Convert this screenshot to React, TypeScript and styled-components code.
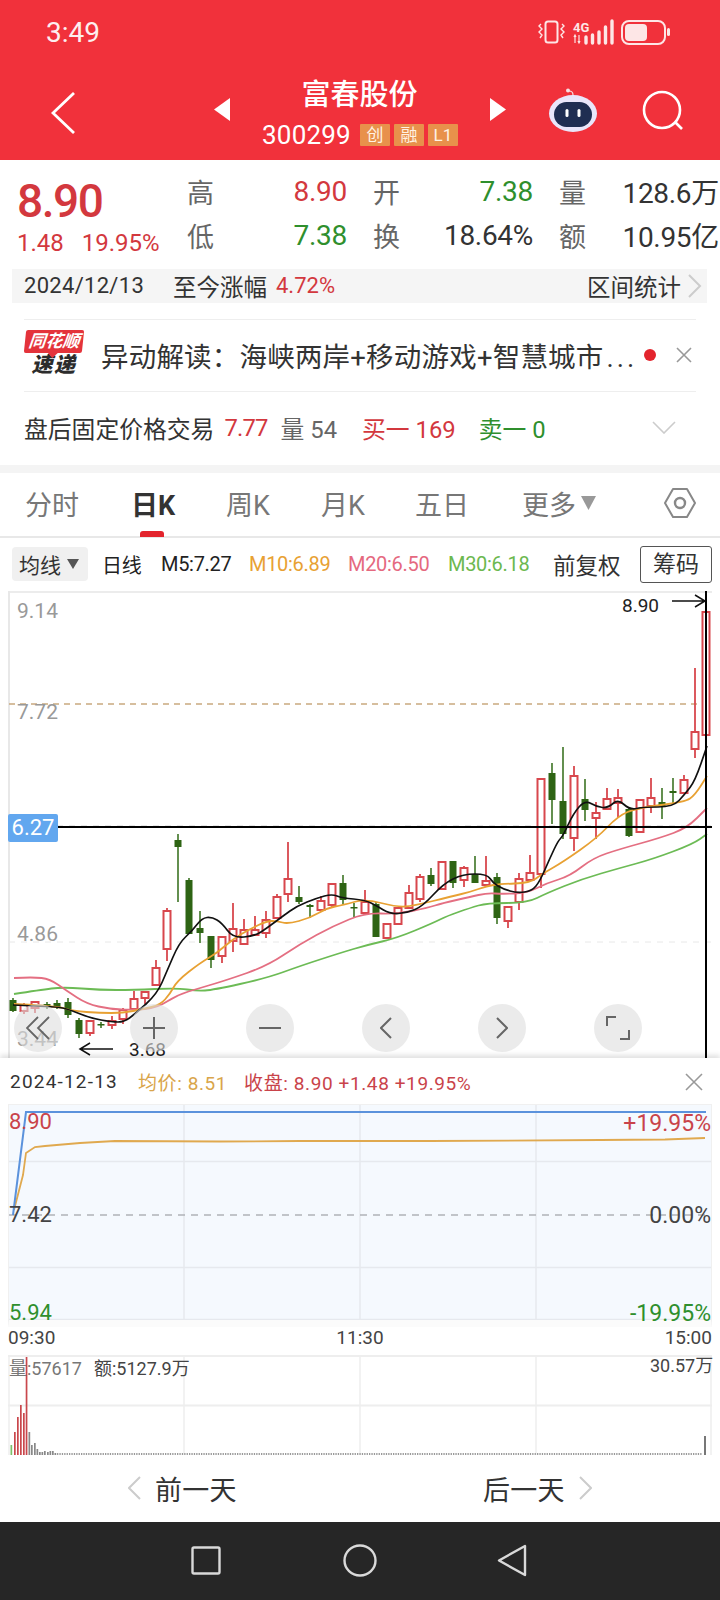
import styled, { createGlobalStyle } from "styled-components";

const FONT = `Roboto, "Noto Sans CJK SC", sans-serif`;
const RED = "#d3383e";
const GREEN = "#2f8f2d";

const GlobalStyle = createGlobalStyle`
  html, body {
    margin: 0;
    padding: 0;
    background: #fff;
  }
  * {
    box-sizing: border-box;
  }
`;

const Page = styled.div`
  width: 720px;
  height: 1600px;
  overflow: hidden;
  display: flex;
  flex-direction: column;
  font-family: ${FONT};
  color: #333;
  background: #fff;
`;

/* header */
const Header = styled.header`
  height: 160px;
  background: #f1313b;
  color: #fff;
  display: flex;
  flex-direction: column;
`;
const StatusBar = styled.div`
  height: 66px;
  padding: 0 50px 2px 46px;
  display: flex;
  align-items: center;
  justify-content: space-between;
`;
const Clock = styled.span`
  font-size: 28px;
  opacity: 0.92;
`;
const NavBar = styled.div`
  height: 94px;
  position: relative;
  display: flex;
  align-items: center;
  padding: 0 36px 0 51px;
`;
const TitleBlock = styled.div`
  flex: 1;
  display: flex;
  align-items: center;
  justify-content: center;
  margin: -8px 0 0 96px;
`;
const TitleCenter = styled.div`
  width: 260px;
  display: flex;
  flex-direction: column;
  align-items: center;
  margin-top: 6px;
`;
const Title = styled.div`
  font-size: 29px;
  line-height: 36px;
  margin-bottom: 10px;
  margin-top: -4px;
  font-weight: 500;
`;
const CodeRow = styled.div`
  display: flex;
  align-items: center;
  gap: 4px;
  margin-left: 1px;
  margin-bottom: -4px;
`;
const Code = styled.span`
  font-size: 26px;
  line-height: 24px;
  margin-right: 5px;
  letter-spacing: 0.2px;
`;
const Badge = styled.span`
  height: 22px;
  width: 30px;
  background: #e8914b;
  border-radius: 1px;
  font-size: 17px;
  line-height: 22px;
  text-align: center;
  color: #fff2e4;
`;
const NavIcons = styled.div`
  display: flex;
  align-items: center;
  gap: 44px;
  margin-top: -6px;
`;

/* quote */
const Quote = styled.section`
  height: 109px;
  display: flex;
`;
const PriceBlock = styled.div`
  width: 187px;
  padding: 17px 0 0 17px;
  color: ${RED};
`;
const BigPrice = styled.div`
  font-size: 46px;
  line-height: 48px;
  letter-spacing: -1.4px;
  font-weight: 500;
`;
const Change = styled.div`
  margin-top: 4px;
  font-size: 24px;
  line-height: 28px;
  display: flex;
  gap: 18px;
`;
const StatGrid = styled.div`
  display: grid;
  grid-template-columns: 160px 160px 160px;
  column-gap: 26px;
  grid-auto-rows: 44px;
  padding-top: 9px;
`;
const Stat = styled.div`
  display: flex;
  align-items: center;
  justify-content: space-between;
`;
const StatLabel = styled.span`
  font-size: 27px;
  color: #666;
`;
const StatValue = styled.span<{ $color?: string }>`
  font-size: 28px;
  white-space: nowrap;
  letter-spacing: -0.3px;
  color: ${(p) => p.$color || "#333"};
`;

const RangeBar = styled.div`
  height: 34px;
  margin: 0 13px 16px 12px;
  padding: 0 5px 0 12px;
  background: #f5f5f5;
  display: flex;
  align-items: center;
  font-size: 23.5px;
  color: #333;
`;
const RangeDate = styled.span`
  width: 149px;
  font-size: 22px;
  letter-spacing: 0.3px;
`;
const RangeGain = styled.span`
  flex: 1;
  font-size: 22px;
  color: ${RED};
  margin-left: 9px;
`;

/* info rows */
const InfoRows = styled.div`
  margin: 0 24px;
`;
const NewsRow = styled.div`
  height: 73px;
  border-top: 1px solid #eee;
  border-bottom: 1px solid #eee;
  display: flex;
  align-items: center;
`;
const Logo = styled.div`
  width: 60px;
  height: 48px;
  position: relative;
  display: flex;
  flex-direction: column;
  align-items: center;
  margin: -2px 17px 0 0;
`;
const LogoFlag = styled.div`
  width: 58px;
  height: 23px;
  background: #e4333b;
  border-radius: 2px;
  transform: skewX(-6deg);
  color: #fff;
  font-size: 17px;
  line-height: 23px;
  font-weight: 700;
  font-style: italic;
  text-align: center;
  position: relative;
  &::after {
    content: "";
    position: absolute;
    left: 24px;
    bottom: -5px;
    border-left: 5px solid transparent;
    border-right: 5px solid transparent;
    border-top: 5px solid #e4333b;
  }
`;
const LogoText = styled.div`
  font-size: 21px;
  line-height: 25px;
  letter-spacing: 1.5px;
  font-weight: 900;
  font-style: italic;
  color: #2c2c2c;
`;
const NewsText = styled.div`
  width: 534px;
  font-size: 27.5px;
  letter-spacing: 0.2px;
  white-space: nowrap;
  color: #333;
`;
const Dots = styled.span`
  letter-spacing: 3px;
  margin-left: 3px;
`;
const RedDot = styled.span`
  width: 12px;
  height: 12px;
  border-radius: 50%;
  background: #e3242d;
  margin: 0 22px 0 9px;
`;
const AfterRow = styled.div`
  height: 73px;
  display: flex;
  align-items: center;
  font-size: 23.8px;
  white-space: nowrap;
  padding-bottom: 1px;
`;
const AfterPart = styled.span<{ $color?: string; $gap?: number }>`
  color: ${(p) => p.$color || "#333"};
  margin-left: ${(p) => p.$gap || 0}px;
`;
const AfterPrice = styled(AfterPart)`
  letter-spacing: -0.8px;
`;
const AfterChevron = styled.span`
  margin-left: auto;
  margin-right: 20px;
  display: flex;
`;
const GrayGap = styled.div`
  height: 8px;
  background: #f4f4f4;
`;

/* tabs */
const Tabs = styled.nav`
  height: 65px;
  border-bottom: 2px solid #e8e8e8;
  display: flex;
  align-items: center;
  padding: 0 24px 2px 25px;
  position: relative;
`;
const Tab = styled.span<{ $active?: boolean; $width: number }>`
  width: ${(p) => p.$width}px;
  font-size: 27px;
  font-weight: ${(p) => (p.$active ? 700 : 400)};
  color: ${(p) => (p.$active ? "#333" : "#777")};
  position: relative;
  white-space: nowrap;
  &::after {
    content: "";
    display: ${(p) => (p.$active ? "block" : "none")};
    position: absolute;
    left: 9px;
    top: 47px;
    width: 24px;
    height: 6px;
    border-radius: 3px 3px 0 0;
    background: #e3242d;
  }
`;
const MoreTab = styled.span`
  display: flex;
  align-items: center;
  gap: 5px;
  font-size: 27px;
  color: #777;
`;
const HexWrap = styled.span`
  margin-left: auto;
  display: flex;
`;

/* toolbar */
const Toolbar = styled.div`
  height: 53px;
  display: flex;
  align-items: center;
  padding: 0 8px 0 12px;
  white-space: nowrap;
`;
const MaPill = styled.div`
  width: 76px;
  height: 34px;
  margin-right: 14px;
  border-radius: 4px;
  background: #f0f0f0;
  display: flex;
  align-items: center;
  gap: 6px;
  padding-left: 7px;
  font-size: 21px;
  color: #333;
`;
const ToolText = styled.span<{ $color?: string; $width: number }>`
  width: ${(p) => p.$width}px;
  font-size: 20px;
  letter-spacing: -0.3px;
  color: ${(p) => p.$color || "#222"};
`;
const AdjustText = styled.span`
  width: 87px;
  font-size: 22.5px;
  color: #333;
`;
const ChipButton = styled.span`
  width: 72px;
  height: 37px;
  border: 1px solid #555;
  border-radius: 3px;
  font-size: 23px;
  line-height: 35px;
  text-align: center;
  color: #333;
`;

/* kline */
const KlineChart = styled.div`
  height: 468px;
  position: relative;
`;
const ChartSvg = styled.svg`
  display: block;
  position: absolute;
  inset: 0;
`;
const AxisLabel = styled.span<{ $x: number; $y: number; $color?: string; $size?: number }>`
  position: absolute;
  left: ${(p) => p.$x}px;
  top: ${(p) => p.$y}px;
  transform: translateY(-50%);
  font-size: ${(p) => p.$size || 21}px;
  line-height: 1;
  white-space: nowrap;
  color: ${(p) => p.$color || "#999"};
`;
const RightLabel = styled.span<{ $y: number; $color: string }>`
  position: absolute;
  right: 0;
  top: ${(p) => p.$y}px;
  transform: translateY(-50%);
  font-size: 23px;
  line-height: 1;
  white-space: nowrap;
  color: ${(p) => p.$color};
`;
const CrossTag = styled.span`
  position: absolute;
  left: 8px;
  top: 223px;
  width: 50px;
  height: 28px;
  background: #62a7ef;
  border-radius: 2px;
  color: #fff;
  font-size: 22px;
  line-height: 28px;
  text-align: center;
`;
const ZoomRow = styled.div`
  position: absolute;
  left: 14px;
  top: 413px;
  display: flex;
  gap: 68px;
`;
const RoundButton = styled.span`
  width: 48px;
  height: 48px;
  border-radius: 50%;
  background: rgba(222, 222, 222, 0.6);
  display: flex;
  align-items: center;
  justify-content: center;
`;

/* intraday panel */
const Panel = styled.section`
  flex: 1;
  display: flex;
  flex-direction: column;
  background: #fff;
  box-shadow: 0 -3px 5px rgba(0, 0, 0, 0.12);
  position: relative;
`;
const PanelHead = styled.div`
  height: 46px;
  padding: 2px 17px 0 10px;
  display: flex;
  align-items: center;
  font-size: 19px;
  white-space: nowrap;
`;
const HeadDate = styled.span`
  color: #333;
  letter-spacing: 1.2px;
`;
const HeadText = styled.span<{ $color: string; $gap: number }>`
  color: ${(p) => p.$color};
  margin-left: ${(p) => p.$gap}px;
  letter-spacing: 0.6px;
`;
const PanelClose = styled.span`
  margin-left: auto;
  display: flex;
`;
const IntradayFrame = styled.div`
  height: 223px;
  margin: 0 8px;
  position: relative;
  background: #f5f9fe;
  border: 1px solid #f0f0f0;
  border-bottom-width: 7px;
  border-bottom-color: #fbfbfb;
`;
const TimeRow = styled.div`
  height: 28px;
  padding: 0 8px 6px;
  display: flex;
  align-items: center;
  justify-content: space-between;
  font-size: 19px;
  color: #444;
`;
const VolumeFrame = styled.div`
  height: 100px;
  margin: 0 8px;
  position: relative;
  border-top: 2px solid #eee;
`;
const DayNav = styled.div`
  height: 67px;
  display: flex;
  align-items: center;
  font-size: 27px;
  letter-spacing: 0.3px;
  color: #333;
`;
const DayButton = styled.span<{ $width: number; $left: number }>`
  width: ${(p) => p.$width}px;
  margin-left: ${(p) => p.$left}px;
  display: flex;
  align-items: center;
  gap: 14px;
`;
const SystemBar = styled.div`
  height: 78px;
  background: #262626;
  display: flex;
  align-items: center;
  padding-left: 191px;
  gap: 122px;
`;

type Candle = [number, number, number, number, number, "r" | "g"];

const candles: Candle[] = [
  [13, 997, 1011, 999, 1010, "g"],
  [24, 1002, 1013, 1004, 1010, "r"],
  [35, 1000, 1012, 1001, 1007, "r"],
  [47, 1001, 1008, 1003, 1006, "g"],
  [57, 999, 1008, 1002, 1006, "g"],
  [68, 997, 1017, 1001, 1014, "g"],
  [79, 1017, 1037, 1019, 1033, "g"],
  [90, 1020, 1035, 1020, 1032, "r"],
  [101, 1021, 1027, 1023, 1024, "g"],
  [112, 1015, 1028, 1020, 1024, "r"],
  [123, 1007, 1023, 1009, 1018, "r"],
  [134, 990, 1010, 998, 1008, "r"],
  [145, 990, 1003, 991, 997, "r"],
  [156, 959, 985, 967, 984, "r"],
  [167, 907, 960, 910, 948, "r"],
  [178, 833, 901, 839, 846, "g"],
  [189, 877, 933, 879, 933, "g"],
  [200, 910, 942, 927, 932, "g"],
  [211, 935, 967, 935, 959, "g"],
  [222, 935, 962, 936, 955, "r"],
  [233, 902, 951, 928, 940, "r"],
  [244, 918, 943, 929, 943, "r"],
  [255, 915, 935, 929, 934, "r"],
  [266, 910, 937, 919, 932, "r"],
  [277, 893, 918, 896, 917, "r"],
  [288, 841, 901, 878, 893, "r"],
  [299, 885, 903, 896, 901, "g"],
  [310, 903, 917, 904, 906, "g"],
  [321, 895, 909, 900, 909, "r"],
  [332, 882, 907, 883, 904, "r"],
  [343, 874, 903, 882, 899, "g"],
  [354, 902, 916, 906, 907, "g"],
  [365, 889, 913, 901, 912, "r"],
  [376, 901, 936, 903, 936, "g"],
  [387, 922, 937, 923, 937, "r"],
  [398, 907, 924, 907, 923, "r"],
  [409, 884, 907, 892, 907, "r"],
  [420, 873, 901, 876, 898, "r"],
  [431, 867, 885, 874, 883, "g"],
  [442, 861, 888, 861, 888, "r"],
  [453, 860, 887, 860, 882, "g"],
  [464, 865, 886, 867, 879, "r"],
  [475, 855, 882, 873, 882, "g"],
  [486, 855, 884, 880, 884, "r"],
  [497, 872, 923, 876, 917, "g"],
  [508, 906, 927, 906, 920, "r"],
  [519, 872, 909, 878, 901, "r"],
  [530, 854, 880, 872, 879, "r"],
  [541, 778, 887, 778, 873, "r"],
  [552, 762, 823, 772, 799, "g"],
  [563, 746, 838, 800, 833, "g"],
  [574, 765, 850, 775, 837, "r"],
  [585, 778, 820, 798, 809, "g"],
  [596, 801, 838, 812, 817, "r"],
  [607, 787, 808, 798, 808, "r"],
  [618, 788, 817, 797, 802, "r"],
  [629, 807, 836, 808, 835, "g"],
  [640, 799, 831, 799, 831, "r"],
  [651, 777, 812, 797, 805, "r"],
  [662, 787, 818, 801, 805, "g"],
  [673, 777, 803, 790, 792, "g"],
  [684, 774, 792, 779, 792, "r"],
  [695, 667, 757, 731, 748, "r"],
  [706, 611, 734, 611, 734, "r"],
];

const ma5 =
  "13,1004 33,1005 57,1006 68,1008 90,1017 112,1021 124,1021 135,1013 157,993 167,970 179,942 192,930 202,917 212,916 222,922 233,937 255,935 267,927 283,915 297,905 317,897 332,893 342,897 365,899 377,905 390,913 407,912 423,905 443,883 463,873 487,873 493,882 503,888 517,892 532,890 540,880 550,857 558,840 563,835 573,813 585,799 597,806 608,807 618,798 630,809 643,806 673,806 685,793 695,780 707,745";
const ma10 =
  "14,1003 57,1005 73,1010 100,1012 123,1012 143,1008 160,1004 170,993 177,980 200,962 217,952 233,938 250,928 267,920 277,920 288,923 310,917 327,907 343,904 365,898 397,906 413,905 453,895 470,891 487,885 500,883 530,882 542,873 563,861 597,837 618,815 637,807 685,801 695,794 707,775";
const ma20 =
  "14,977 33,976 50,978 67,990 87,1003 110,1008 133,1009 157,1007 177,994 200,987 227,979 267,965 300,943 333,925 365,912 397,913 427,907 443,902 470,896 487,892 503,893 527,892 547,882 570,875 593,857 620,848 660,837 687,827 707,807";
const ma30 =
  "14,993 40,989 63,986 100,989 133,989 177,987 197,990 213,989 267,977 300,965 340,952 367,944 397,937 433,922 447,915 470,907 487,902 527,902 547,892 582,878 620,867 653,858 693,843 707,833";

const avgLine =
  "5,105 14,70 17,48 26,42 36,41 71,38 106,36 211,36.5 291,36 421,36 591,35 656,34.5 696,33";

const volumeBars: [number, number, string][] = [
  [2.5, 10, "#7cc06a"],
  [6, 23, "#c9474c"],
  [9, 38, "#c9474c"],
  [12, 50, "#c9474c"],
  [15, 42, "#c9474c"],
  [17.7, 100, "#c9474c"],
  [20.5, 23, "#888"],
  [23, 10, "#888"],
  [26, 12, "#888"],
  [28.5, 6, "#888"],
  [31, 3, "#888"],
  [33.5, 3, "#888"],
  [36, 4, "#888"],
  [39, 3, "#888"],
  [41.5, 4, "#888"],
  [44, 4, "#888"],
  [46.5, 2, "#888"],
];

// round the corners of a moving-average line, through the midpoints of its segments
function smoothPath(points: string) {
  const pts = points.split(" ").map((p) => p.split(",").map(Number));
  let d = `M${pts[0][0]} ${pts[0][1]}`;
  for (let i = 1; i < pts.length - 1; i++) {
    const mx = (pts[i][0] + pts[i + 1][0]) / 2;
    const my = (pts[i][1] + pts[i + 1][1]) / 2;
    d += `Q${pts[i][0]} ${pts[i][1]} ${mx} ${my}`;
  }
  const last = pts[pts.length - 1];
  return `${d}L${last[0]} ${last[1]}`;
}

function KlineDrawing() {
  return (
    <ChartSvg width="720" height="468" viewBox="0 590 720 468">
      <line x1="9" y1="591" x2="712" y2="591" stroke="#ececec" strokeWidth="2" />
      <line x1="9" y1="590" x2="9" y2="1058" stroke="#e8e8e8" strokeWidth="2" />
      <line x1="9" y1="703" x2="712" y2="703" stroke="#c9a97f" strokeWidth="1.5" strokeDasharray="6 5" />
      <line x1="9" y1="824.5" x2="712" y2="824.5" stroke="#e8e8e8" strokeDasharray="6 6" />
      <line x1="9" y1="941" x2="712" y2="941" stroke="#e8e8e8" strokeDasharray="6 6" />
      {candles.map(([x, hi, lo, top, bottom, kind]) =>
        kind === "g" ? (
          <g key={x}>
            <line x1={x} y1={hi} x2={x} y2={lo} stroke="#3d7424" strokeWidth="1.6" />
            <rect x={x - 3.5} y={top} width="7" height={Math.max(bottom - top, 1.5)} fill="#2e6414" />
          </g>
        ) : (
          <g key={x}>
            <line x1={x} y1={hi} x2={x} y2={top} stroke="#d8474d" strokeWidth="1.8" />
            <line x1={x} y1={bottom} x2={x} y2={lo} stroke="#d8474d" strokeWidth="1.8" />
            <rect x={x - 3.5} y={top} width="7" height={bottom - top} fill="#fff" stroke="#d8474d" strokeWidth="2" />
          </g>
        ),
      )}
      <path d={smoothPath(ma30)} fill="none" stroke="#6cbb55" strokeWidth="1.8" />
      <path d={smoothPath(ma20)} fill="none" stroke="#e46f82" strokeWidth="1.8" />
      <path d={smoothPath(ma10)} fill="none" stroke="#e8a133" strokeWidth="1.8" />
      <path d={smoothPath(ma5)} fill="none" stroke="#111" strokeWidth="1.7" />
      <line x1="58" y1="826" x2="712" y2="826" stroke="#000" strokeWidth="2" />
      <line x1="706" y1="590" x2="706" y2="1058" stroke="#000" strokeWidth="2" />
      <path d="M672 600H705M695 594l10 6-10 6" fill="none" stroke="#111" strokeWidth="1.5" />
      <path d="M113 1048H80M90 1042l-10 6 10 6" fill="none" stroke="#111" strokeWidth="1.5" />
    </ChartSvg>
  );
}

function IntradayDrawing() {
  return (
    <ChartSvg width="702" height="215" viewBox="0 0 702 215">
      <path d="M0 56.5H702M0 162.5H702M0 214.5H702" stroke="#e6e9ee" strokeWidth="1.5" />
      <path d="M175 0V215M351 0V215M527 0V215" stroke="#e6e9ee" strokeWidth="1.5" />
      <line x1="0" y1="110" x2="702" y2="110" stroke="#b0b3b8" strokeWidth="1.5" strokeDasharray="7 6" />
      <polyline points={avgLine} fill="none" stroke="#e0a94f" strokeWidth="1.8" />
      <polyline points="4,110 17,7 697,7" fill="none" stroke="#5b92dc" strokeWidth="2" />
    </ChartSvg>
  );
}

function VolumeDrawing() {
  const small: number[] = [];
  for (let x = 49; x < 694; x += 2.4) small.push(x);
  return (
    <ChartSvg width="704" height="98" viewBox="0 0 704 98">
      <path d="M0 48.5H704" stroke="#eee" strokeWidth="2" />
      <path d="M176 0V98M352 0V98M528 0V98" stroke="#eee" strokeWidth="1.5" />
      <path d="M1 0V98M703 0V98" stroke="#eee" strokeWidth="1.5" />
      {small.map((x) => (
        <rect key={x} x={x} y={96} width="1.3" height="2" fill="#999" />
      ))}
      {volumeBars.map(([x, h, c]) => (
        <rect key={x} x={x} y={98 - h} width="1.7" height={h} fill={c} />
      ))}
      <rect x="696" y="79" width="2" height="19" fill="#777" />
    </ChartSvg>
  );
}

function App() {
  return (
    <Page>
      <GlobalStyle />
      <Header>
        <StatusBar>
          <Clock>3:49</Clock>
          <svg width="133" height="26" viewBox="537 19 133 26" fill="none">
            <rect x="545.5" y="21.5" width="12" height="21" rx="2.5" stroke="#fde6e6" strokeWidth="2" />
            <path d="M541 24l-2 2 3 3-3 3 3 3-2 3M562 24l2 2-3 3 3 3-3 3 2 3" stroke="#fde6e6" strokeWidth="1.4" />
            <text x="573" y="32" fill="#fde6e6" fontSize="13" fontWeight="700" fontFamily="Roboto">4G</text>
            <path d="M575 35v8M574 37l1-2 1 2M579 35v7M578 41l1 2 1-2" stroke="#fde6e6" strokeWidth="1.2" />
            <path d="M586 37v6M592.5 35v8M599 32v11M605.5 27v16M612 21v22" stroke="#fde6e6" strokeWidth="3.4" strokeLinecap="round" />
            <rect x="622" y="21" width="43" height="23" rx="7" stroke="#fde6e6" strokeWidth="2" />
            <rect x="625" y="24" width="22" height="17" rx="4" fill="#fde6e6" />
            <rect x="667" y="28" width="3" height="8" rx="1.5" fill="#fde6e6" />
          </svg>
        </StatusBar>
        <NavBar>
          <svg width="24" height="42" viewBox="0 0 24 42" fill="none">
            <path d="M23 1L2 21l21 20" stroke="#fff" strokeWidth="2.8" />
          </svg>
          <TitleBlock>
            <svg width="16" height="23" viewBox="0 0 16 23">
              <path d="M16 0V23L0 11.5Z" fill="#fff" />
            </svg>
            <TitleCenter>
              <Title>富春股份</Title>
              <CodeRow>
                <Code>300299</Code>
                <Badge>创</Badge>
                <Badge>融</Badge>
                <Badge>L1</Badge>
              </CodeRow>
            </TitleCenter>
            <svg width="16" height="23" viewBox="0 0 16 23">
              <path d="M0 0V23L16 11.5Z" fill="#fff" />
            </svg>
          </TitleBlock>
          <NavIcons>
            <svg width="50" height="44" viewBox="549 88 50 44">
              <circle cx="569" cy="90.5" r="2" fill="#f6dfe3" />
              <path d="M570 91c3 0 4 2 4 4" stroke="#f6dfe3" fill="none" strokeWidth="1.2" />
              <ellipse cx="574" cy="113.5" rx="24" ry="18.5" fill="#e9e6fa" />
              <rect x="555" y="102" width="38" height="25" rx="12.5" fill="#1f2e52" />
              <rect x="566.5" y="109" width="3" height="8" rx="1.5" fill="#fff" />
              <rect x="578.5" y="109" width="3" height="8" rx="1.5" fill="#fff" />
            </svg>
            <svg width="42" height="40" viewBox="643 92 42 40" fill="none">
              <circle cx="663" cy="112" r="18" stroke="#fff" strokeWidth="2.6" />
              <path d="M676 124l7 7" stroke="#fff" strokeWidth="2.6" />
            </svg>
          </NavIcons>
        </NavBar>
      </Header>

      <Quote>
        <PriceBlock>
          <BigPrice>8.90</BigPrice>
          <Change>
            <span>1.48</span>
            <span>19.95%</span>
          </Change>
        </PriceBlock>
        <StatGrid>
          <Stat>
            <StatLabel>高</StatLabel>
            <StatValue $color={RED}>8.90</StatValue>
          </Stat>
          <Stat>
            <StatLabel>开</StatLabel>
            <StatValue $color={GREEN}>7.38</StatValue>
          </Stat>
          <Stat>
            <StatLabel>量</StatLabel>
            <StatValue>128.6万</StatValue>
          </Stat>
          <Stat>
            <StatLabel>低</StatLabel>
            <StatValue $color={GREEN}>7.38</StatValue>
          </Stat>
          <Stat>
            <StatLabel>换</StatLabel>
            <StatValue>18.64%</StatValue>
          </Stat>
          <Stat>
            <StatLabel>额</StatLabel>
            <StatValue>10.95亿</StatValue>
          </Stat>
        </StatGrid>
      </Quote>

      <RangeBar>
        <RangeDate>2024/12/13</RangeDate>
        <span>至今涨幅</span>
        <RangeGain>4.72%</RangeGain>
        <span>区间统计</span>
        <svg width="14" height="24" viewBox="0 0 14 24" fill="none" style={{ marginLeft: 7 }}>
          <path d="M1 1l11 11L1 23" stroke="#ccc" strokeWidth="2" />
        </svg>
      </RangeBar>

      <InfoRows>
        <NewsRow>
          <Logo>
            <LogoFlag>同花顺</LogoFlag>
            <LogoText>速递</LogoText>
          </Logo>
          <NewsText>
            异动解读：海峡两岸+移动游戏+智慧城市<Dots>...</Dots>
          </NewsText>
          <RedDot />
          <svg width="16" height="16" viewBox="0 0 16 16" fill="none" style={{ marginLeft: -2 }}>
            <path d="M1 1l14 14M15 1L1 15" stroke="#999" strokeWidth="1.6" />
          </svg>
        </NewsRow>
        <AfterRow>
          <AfterPart>盘后固定价格交易</AfterPart>
          <AfterPrice $color={RED} $gap={10}>7.77</AfterPrice>
          <AfterPart $color="#666" $gap={13}>量 54</AfterPart>
          <AfterPart $color={RED} $gap={25}>买一 169</AfterPart>
          <AfterPart $color={GREEN} $gap={23}>卖一 0</AfterPart>
          <AfterChevron>
            <svg width="24" height="13" viewBox="0 0 24 13" fill="none">
              <path d="M1 1l11 11L23 1" stroke="#ccc" strokeWidth="1.6" />
            </svg>
          </AfterChevron>
        </AfterRow>
      </InfoRows>
      <GrayGap />

      <Tabs>
        <Tab $width={106}>分时</Tab>
        <Tab $width={95} $active>日K</Tab>
        <Tab $width={95}>周K</Tab>
        <Tab $width={94}>月K</Tab>
        <Tab $width={107}>五日</Tab>
        <MoreTab>
          更多
          <svg width="15" height="14" viewBox="0 0 15 14">
            <path d="M0 0H15L7.5 14Z" fill="#999" />
          </svg>
        </MoreTab>
        <HexWrap>
          <svg width="32" height="32" viewBox="0 0 32 32" fill="none">
            <path d="M9 2h14l8 14-8 14H9L1 16Z" stroke="#888" strokeWidth="2" strokeLinejoin="round" />
            <circle cx="16" cy="16" r="5" stroke="#888" strokeWidth="2.4" />
          </svg>
        </HexWrap>
      </Tabs>

      <Toolbar>
        <MaPill>
          均线
          <svg width="12" height="10" viewBox="0 0 12 10">
            <path d="M0 0H12L6 10Z" fill="#555" />
          </svg>
        </MaPill>
        <ToolText $width={59}>日线</ToolText>
        <ToolText $width={88}>M5:7.27</ToolText>
        <ToolText $width={99} $color="#e8a133">M10:6.89</ToolText>
        <ToolText $width={100} $color="#e5697f">M20:6.50</ToolText>
        <ToolText $width={105} $color="#6cb84f">M30:6.18</ToolText>
        <AdjustText>前复权</AdjustText>
        <ChipButton>筹码</ChipButton>
      </Toolbar>

      <KlineChart>
        <KlineDrawing />
        <AxisLabel $x={17} $y={20}>9.14</AxisLabel>
        <AxisLabel $x={17} $y={121}>7.72</AxisLabel>
        <AxisLabel $x={17} $y={343}>4.86</AxisLabel>
        <AxisLabel $x={17} $y={448}>3.44</AxisLabel>
        <AxisLabel $x={622} $y={14} $color="#222" $size={19}>8.90</AxisLabel>
        <AxisLabel $x={129} $y={458} $color="#222" $size={19}>3.68</AxisLabel>
        <CrossTag>6.27</CrossTag>
        <ZoomRow>
          <RoundButton>
            <svg width="24" height="24" viewBox="0 0 24 24" fill="none">
              <path d="M12 1L1 12l11 11M23 1L12 12l11 11" stroke="#666" strokeWidth="1.8" />
            </svg>
          </RoundButton>
          <RoundButton>
            <svg width="22" height="22" viewBox="0 0 22 22" fill="none">
              <path d="M0 11H22M11 0V22" stroke="#666" strokeWidth="2" />
            </svg>
          </RoundButton>
          <RoundButton>
            <svg width="22" height="4" viewBox="0 0 22 4" fill="none">
              <path d="M0 2H22" stroke="#666" strokeWidth="2" />
            </svg>
          </RoundButton>
          <RoundButton>
            <svg width="12" height="22" viewBox="0 0 12 22" fill="none">
              <path d="M11 1L1 11l10 10" stroke="#666" strokeWidth="2" />
            </svg>
          </RoundButton>
          <RoundButton>
            <svg width="12" height="22" viewBox="0 0 12 22" fill="none">
              <path d="M1 1l10 10L1 21" stroke="#666" strokeWidth="2" />
            </svg>
          </RoundButton>
          <RoundButton>
            <svg width="24" height="24" viewBox="0 0 24 24" fill="none">
              <path d="M1 10V1h9M23 14v9h-9" stroke="#666" strokeWidth="2" />
            </svg>
          </RoundButton>
        </ZoomRow>
      </KlineChart>

      <Panel>
        <PanelHead>
          <HeadDate>2024-12-13</HeadDate>
          <HeadText $color="#d9a54a" $gap={20}>均价: 8.51</HeadText>
          <HeadText $color="#c9434a" $gap={17}>收盘: 8.90 +1.48 +19.95%</HeadText>
          <PanelClose>
            <svg width="18" height="18" viewBox="0 0 18 18" fill="none">
              <path d="M1 1l16 16M17 1L1 17" stroke="#999" strokeWidth="1.6" />
            </svg>
          </PanelClose>
        </PanelHead>
        <IntradayFrame>
          <IntradayDrawing />
          <AxisLabel $x={0} $y={17} $color="#c9434a" $size={22}>8.90</AxisLabel>
          <AxisLabel $x={0} $y={110} $color="#444" $size={22}>7.42</AxisLabel>
          <AxisLabel $x={0} $y={208} $color={GREEN} $size={22}>5.94</AxisLabel>
          <RightLabel $y={18} $color="#c9434a">+19.95%</RightLabel>
          <RightLabel $y={110} $color="#444">0.00%</RightLabel>
          <RightLabel $y={208} $color={GREEN}>-19.95%</RightLabel>
        </IntradayFrame>
        <TimeRow>
          <span>09:30</span>
          <span>11:30</span>
          <span>15:00</span>
        </TimeRow>
        <VolumeFrame>
          <VolumeDrawing />
          <AxisLabel $x={1} $y={12} $color="#777" $size={18}>量:57617</AxisLabel>
          <AxisLabel $x={86} $y={12} $color="#444" $size={18}>额:5127.9万</AxisLabel>
          <AxisLabel $x={642} $y={9} $color="#444" $size={18}>30.57万</AxisLabel>
        </VolumeFrame>
        <DayNav>
          <DayButton $width={230} $left={128}>
            <svg width="13" height="24" viewBox="0 0 13 24" fill="none">
              <path d="M12 1L1 12l11 11" stroke="#ccc" strokeWidth="2" />
            </svg>
            前一天
          </DayButton>
          <DayButton $width={130} $left={125}>
            后一天
            <svg width="13" height="24" viewBox="0 0 13 24" fill="none">
              <path d="M1 1l11 11L1 23" stroke="#ccc" strokeWidth="2" />
            </svg>
          </DayButton>
        </DayNav>
        <SystemBar>
          <svg width="30" height="29" viewBox="0 0 30 29" fill="none">
            <rect x="1.5" y="1.5" width="27" height="26" rx="1.5" stroke="#d9d9d9" strokeWidth="2.4" />
          </svg>
          <svg width="34" height="33" viewBox="0 0 34 33" fill="none">
            <ellipse cx="17" cy="16.5" rx="15.5" ry="15" stroke="#d9d9d9" strokeWidth="2.4" />
          </svg>
          <svg width="30" height="33" viewBox="0 0 30 33" fill="none" style={{ marginLeft: -2 }}>
            <path d="M28 2V31L2 16.5Z" stroke="#d9d9d9" strokeWidth="2.4" strokeLinejoin="round" />
          </svg>
        </SystemBar>
      </Panel>
    </Page>
  );
}

export default App;
